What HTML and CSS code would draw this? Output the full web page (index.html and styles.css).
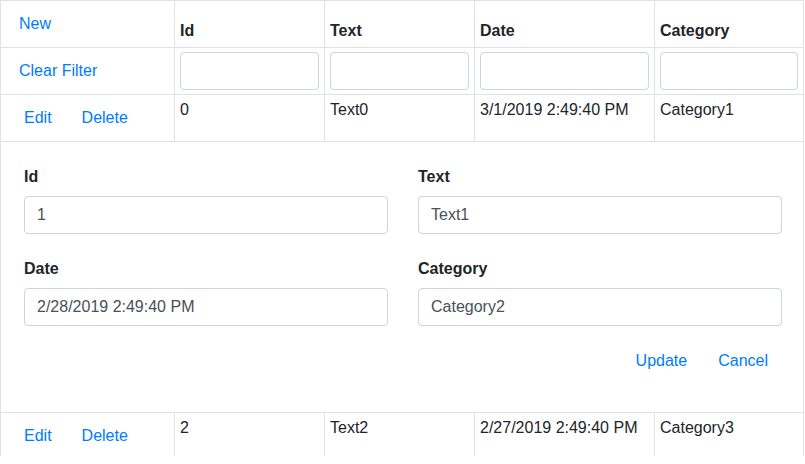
FILE: index.html
```html
<!DOCTYPE html>
<html>
<head>
<meta charset="utf-8">
<link rel="stylesheet" href="styles.css">
</head>
<body>
<div class="viewport">
  <div class="grid">
    <div class="cell head-action"><button class="btn-link">New</button></div>
    <div class="cell th">Id</div>
    <div class="cell th">Text</div>
    <div class="cell th">Date</div>
    <div class="cell th last">Category</div>

    <div class="cell filter-action"><button class="btn-link">Clear Filter</button></div>
    <div class="cell filter"><input class="form-control" type="text"></div>
    <div class="cell filter"><input class="form-control" type="text"></div>
    <div class="cell filter"><input class="form-control" type="text"></div>
    <div class="cell filter last"><input class="form-control" type="text"></div>

    <div class="cell actions"><button class="btn-link">Edit</button><button class="btn-link">Delete</button></div>
    <div class="cell td">0</div>
    <div class="cell td">Text0</div>
    <div class="cell td">3/1/2019 2:49:40 PM</div>
    <div class="cell td last">Category1</div>

    <div class="cell edit-row">
      <div class="form-grid">
        <div class="form-group">
          <label class="label">Id</label>
          <input class="form-control" type="text" value="1">
        </div>
        <div class="form-group">
          <label class="label">Text</label>
          <input class="form-control" type="text" value="Text1">
        </div>
        <div class="form-group">
          <label class="label">Date</label>
          <input class="form-control" type="text" value="2/28/2019 2:49:40 PM">
        </div>
        <div class="form-group">
          <label class="label">Category</label>
          <input class="form-control" type="text" value="Category2">
        </div>
      </div>
      <div class="form-actions"><button class="btn-link">Update</button><button class="btn-link">Cancel</button></div>
    </div>

    <div class="cell actions"><button class="btn-link">Edit</button><button class="btn-link">Delete</button></div>
    <div class="cell td">2</div>
    <div class="cell td">Text2</div>
    <div class="cell td">2/27/2019 2:49:40 PM</div>
    <div class="cell td last">Category3</div>
  </div>
</div>
</body>
</html>
```

FILE: styles.css
```css
* { box-sizing: border-box; }
html, body { margin: 0; padding: 0; background: #fff; }
body {
  font-family: "Liberation Sans", Arial, sans-serif;
  font-size: 16px;
  line-height: 24px;
  color: #212529;
}
.viewport {
  width: 805px;
  height: 456px;
  overflow: hidden;
}
.grid {
  width: 804px;
  display: grid;
  grid-template-columns: 174px 150px 150px 180px 148px;
  border: 1px solid #dee2e6;
  border-bottom: none;
}
.cell {
  border-right: 1px solid #dee2e6;
  border-bottom: 1px solid #dee2e6;
  padding: 3px 5px;
  min-height: 47px;
}
.cell.last { border-right: none; }
.btn-link {
  font: inherit;
  line-height: 24px;
  color: #007bff;
  background: none;
  border: 1px solid transparent;
  padding: 5px 11px;
  margin: 0;
  cursor: pointer;
}
.head-action { padding: 5px 6px 0; }
.th {
  font-weight: bold;
  display: flex;
  align-items: flex-end;
  padding: 0 5px 4px;
}
.filter-action {
  padding: 0 6px;
  display: flex;
  align-items: center;
}
.filter { padding: 4px 5px; }
.form-control {
  display: block;
  width: 100%;
  height: 38px;
  padding: 6px 12px;
  font: inherit;
  line-height: 24px;
  color: #495057;
  background: #fff;
  border: 1px solid #ced4da;
  border-radius: 4px;
}
.actions {
  display: flex;
  align-items: center;
  gap: 6px;
  padding: 0 0 0 11px;
}
.td { padding: 3px 5px; }
.edit-row {
  grid-column: 1 / -1;
  border-right: none;
  padding: 23px 21px 33px 23px;
}
.form-grid {
  display: grid;
  grid-template-columns: 1fr 1fr;
  column-gap: 30px;
}
.form-group { margin-bottom: 23px; }
.form-group:nth-child(n+3) { margin-bottom: 17px; }
.label {
  display: block;
  font-weight: bold;
  margin-bottom: 7px;
}
.form-actions {
  display: flex;
  justify-content: flex-end;
  gap: 7px;
  margin-right: 2px;
}
```
